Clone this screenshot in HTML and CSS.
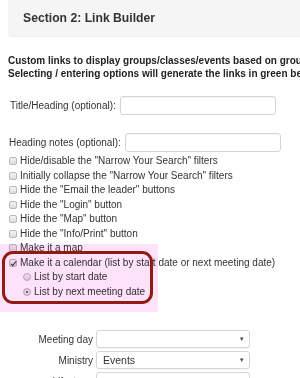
FILE: index.html
```html
<!DOCTYPE html>
<html lang="en">
<head>
    <meta charset="UTF-8">
    <meta name="viewport" content="width=device-width, initial-scale=1.0">
    <title>Link Builder</title>
    <link rel="stylesheet" href="styles.css">
</head>
<body>

<div class="page">
    <div class="panel-heading">Section 2: Link Builder</div>

    <p class="intro">
        Custom links to display groups/classes/events based on group types, ministries and other options.<br>
        Selecting / entering options will generate the links in green below.
    </p>

    <div class="field">
        <label for="title">Title/Heading (optional):</label>
        <input type="text" id="title" class="text-input">
    </div>

    <div class="field field-notes">
        <label for="notes">Heading notes (optional):</label>
        <input type="text" id="notes" class="text-input">
    </div>

    <div class="options">
        <label class="opt"><input type="checkbox"> Hide/disable the "Narrow Your Search" filters</label>
        <label class="opt"><input type="checkbox"> Initially collapse the "Narrow Your Search" filters</label>
        <label class="opt"><input type="checkbox"> Hide the "Email the leader" buttons</label>
        <label class="opt"><input type="checkbox"> Hide the "Login" button</label>
        <label class="opt"><input type="checkbox"> Hide the "Map" button</label>
        <label class="opt"><input type="checkbox"> Hide the "Info/Print" button</label>
        <label class="opt"><input type="checkbox"> Make it a map</label>
        <label class="opt"><input type="checkbox" checked> Make it a calendar (list by start date or next meeting date)</label>
        <label class="opt sub"><input type="radio" name="listby"> List by start date</label>
        <label class="opt sub"><input type="radio" name="listby" checked> List by next meeting date</label>

        <div class="highlight-fill"></div>
        <div class="highlight-ring"></div>
    </div>

    <div class="filters">
        <div class="filter-row">
            <label>Meeting day</label>
            <div class="select"><span></span><span class="caret">&#9662;</span></div>
        </div>
        <div class="filter-row">
            <label>Ministry</label>
            <div class="select"><span>Events</span><span class="caret">&#9662;</span></div>
        </div>
        <div class="filter-row">
            <label>Lifestage</label>
            <div class="select"><span></span><span class="caret">&#9662;</span></div>
        </div>
    </div>
</div>

</body>
</html>
```

FILE: styles.css
```css
html, body {
    margin: 0;
    overflow: hidden;
    background-color: #fff;
}
body {
    font-family: 'Liberation Sans', Arial, sans-serif;
    font-size: 10px;
    color: #333;
}
.page {
    width: 640px;
    white-space: nowrap;
}
.panel-heading {
    margin-left: 8px;
    height: 37px;
    box-sizing: border-box;
    padding: 11px 0 0 15px;
    background-color: #f5f5f5;
    border-bottom: 1px solid #ececec;
    border-radius: 0 0 0 4px;
    font-size: 12.2px;
    line-height: 15px;
    font-weight: bold;
    color: #333;
}
.intro {
    margin: 17px 0 0 8px;
    font-weight: bold;
    line-height: 13px;
    color: #222;
}
.field {
    display: flex;
    align-items: center;
    gap: 4px;
    margin: 16px 0 0 10px;
}
.field-notes {
    margin: 18px 0 0 9px;
}
.text-input {
    width: 156px;
    height: 19px;
    box-sizing: border-box;
    border: 1px solid #d4d4d4;
    border-radius: 3px;
    padding: 0 5px;
    background: #fff;
    box-shadow: inset 0 1px 1px rgba(0, 0, 0, 0.04);
}
.options {
    position: relative;
    margin: 2px 0 0 0;
}
.opt {
    display: flex;
    align-items: center;
    gap: 3px;
    padding-left: 9px;
    height: 14.5px;
    line-height: 14.5px;
}
.opt.sub {
    padding-left: 23px;
}
.opt input {
    appearance: none;
    -webkit-appearance: none;
    margin: 0;
    width: 8px;
    height: 8px;
    border: 1px solid #b9b9b9;
    border-radius: 2px;
    background: linear-gradient(#f4f4f4, #dcdcdc);
    position: relative;
    flex: none;
}
.opt input[type="checkbox"]:checked::after {
    content: "";
    position: absolute;
    left: 2px;
    top: 0px;
    width: 2px;
    height: 5px;
    border: solid #333;
    border-width: 0 1.5px 1.5px 0;
    transform: rotate(40deg);
}
.opt input[type="radio"] {
    border-radius: 50%;
}
.opt input[type="radio"]:checked {
    box-shadow: inset 0 0 0 2px #f0f0f0, inset 0 0 0 4px #444;
}
.highlight-fill {
    position: absolute;
    left: 0;
    width: 158px;
    top: 90px;
    height: 68px;
    background-color: #fde2fa;
    mix-blend-mode: multiply;
}
.highlight-ring {
    position: absolute;
    left: 2px;
    width: 151px;
    top: 97px;
    height: 53px;
    box-sizing: border-box;
    border: 3.5px solid #8f1b12;
    border-radius: 11px;
}
.filters {
    margin-top: 31px;
    display: flex;
    flex-direction: column;
    gap: 3px;
}
.filter-row {
    display: flex;
    align-items: center;
    gap: 3px;
}
.filter-row label {
    width: 93px;
    text-align: right;
    font-size: 10px;
}
.select {
    width: 154px;
    height: 18px;
    box-sizing: border-box;
    border: 1px solid #d6d6d6;
    border-radius: 3px;
    display: flex;
    align-items: center;
    justify-content: space-between;
    padding: 0 5px 0 6px;
    box-shadow: 0 1px 1px rgba(0, 0, 0, 0.05);
    font-size: 10.5px;
}
.caret {
    font-size: 7px;
    color: #444;
}
```
